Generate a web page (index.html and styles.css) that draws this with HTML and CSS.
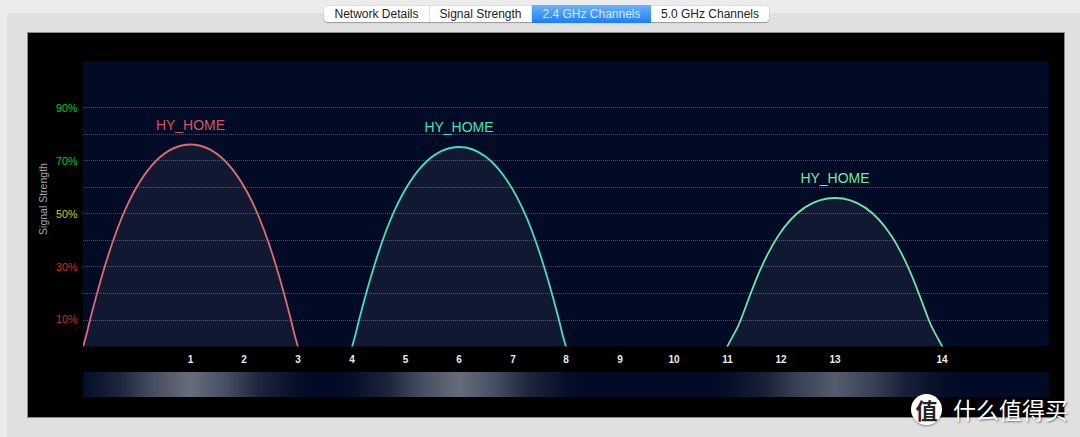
FILE: index.html
```html
<!DOCTYPE html>
<html lang="en">
<head>
    <meta charset="UTF-8">
    <title>2.4 GHz Channels</title>
    <link rel="stylesheet" href="styles.css">
</head>

<body>
    <div class="tabs">
        <span class="tab tab-network">Network Details</span>
        <span class="tab tab-signal">Signal Strength</span>
        <span class="tab tab-24 active">2.4 GHz Channels</span>
        <span class="tab tab-50">5.0 GHz Channels</span>
    </div>

    <div class="panel">
        <div class="chart">
            <svg class="chart-svg" width="1038" height="385" viewBox="27 32 1038 385">
                <defs>
                    <linearGradient id="glow" gradientUnits="userSpaceOnUse" x1="83" y1="0" x2="1049" y2="0">
                        <stop offset="0" stop-color="#fff" stop-opacity="0.01"/>
                        <stop offset="0.0388" stop-color="#fff" stop-opacity="0.11"/>
                        <stop offset="0.0720" stop-color="#fff" stop-opacity="0.27"/>
                        <stop offset="0.1108" stop-color="#fff" stop-opacity="0.40"/>
                        <stop offset="0.1496" stop-color="#fff" stop-opacity="0.27"/>
                        <stop offset="0.1828" stop-color="#fff" stop-opacity="0.11"/>
                        <stop offset="0.2216" stop-color="#fff" stop-opacity="0.015"/>
                        <stop offset="0.2378" stop-color="#fff" stop-opacity="0"/>
                        <stop offset="0.2622" stop-color="#fff" stop-opacity="0"/>
                        <stop offset="0.2784" stop-color="#fff" stop-opacity="0.015"/>
                        <stop offset="0.3172" stop-color="#fff" stop-opacity="0.11"/>
                        <stop offset="0.3504" stop-color="#fff" stop-opacity="0.27"/>
                        <stop offset="0.3892" stop-color="#fff" stop-opacity="0.40"/>
                        <stop offset="0.4280" stop-color="#fff" stop-opacity="0.27"/>
                        <stop offset="0.4612" stop-color="#fff" stop-opacity="0.11"/>
                        <stop offset="0.5000" stop-color="#fff" stop-opacity="0.015"/>
                        <stop offset="0.5162" stop-color="#fff" stop-opacity="0"/>
                        <stop offset="0.6516" stop-color="#fff" stop-opacity="0"/>
                        <stop offset="0.6678" stop-color="#fff" stop-opacity="0.012"/>
                        <stop offset="0.7066" stop-color="#fff" stop-opacity="0.09"/>
                        <stop offset="0.7398" stop-color="#fff" stop-opacity="0.22"/>
                        <stop offset="0.7786" stop-color="#fff" stop-opacity="0.33"/>
                        <stop offset="0.8174" stop-color="#fff" stop-opacity="0.22"/>
                        <stop offset="0.8506" stop-color="#fff" stop-opacity="0.09"/>
                        <stop offset="0.8894" stop-color="#fff" stop-opacity="0.012"/>
                        <stop offset="0.9056" stop-color="#fff" stop-opacity="0"/>
                    </linearGradient>
                    <clipPath id="plot-clip">
                        <rect x="83" y="61" width="966" height="285.5"/>
                    </clipPath>
                </defs>

                <rect class="plot-bg" x="83" y="61" width="966" height="285.5"/>

                <!-- curve fills go under the grid -->
                <g class="curve-fills" clip-path="url(#plot-clip)">
                    <path d="M83 347 C86 337 88 329 90 320 C101 279 131 144.5 190.5 144.5 C250 144.5 280 279 291 320 C293 329 295 337 298 347 Z"/>
                    <path d="M352 347 C355 337 357 329 359 320 C370 280 400 147 459 147 C518 147 548 280 559 320 C561 329 563 337 566 347 Z"/>
                    <path d="M727 347 C731.5 338 737 330 740.7 320 C756 281 780 198 835 198 C889.5 198 913.5 281 928.8 320 C932.5 330 938 338 942.5 347 Z"/>
                </g>

                <g class="grid">
                    <line x1="83" x2="1049" y1="107.5" y2="107.5"/>
                    <line x1="83" x2="1049" y1="134.5" y2="134.5"/>
                    <line x1="83" x2="1049" y1="160.5" y2="160.5"/>
                    <line x1="83" x2="1049" y1="187.5" y2="187.5"/>
                    <line x1="83" x2="1049" y1="213.5" y2="213.5"/>
                    <line x1="83" x2="1049" y1="240.5" y2="240.5"/>
                    <line x1="83" x2="1049" y1="266.5" y2="266.5"/>
                    <line x1="83" x2="1049" y1="293.5" y2="293.5"/>
                    <line x1="83" x2="1049" y1="320.5" y2="320.5"/>
                </g>

                <g clip-path="url(#plot-clip)" fill="none">
                    <path class="curve-red" d="M83 347 C86 337 88 329 90 320 C101 279 131 144.5 190.5 144.5 C250 144.5 280 279 291 320 C293 329 295 337 298 347"/>
                    <path class="curve-teal" d="M352 347 C355 337 357 329 359 320 C370 280 400 147 459 147 C518 147 548 280 559 320 C561 329 563 337 566 347"/>
                    <path class="curve-green" d="M727 347 C731.5 338 737 330 740.7 320 C756 281 780 198 835 198 C889.5 198 913.5 281 928.8 320 C932.5 330 938 338 942.5 347"/>
                </g>

                <text class="net-label label-red" x="190.5" y="130">HY_HOME</text>
                <text class="net-label label-teal" x="459" y="132">HY_HOME</text>
                <text class="net-label label-green" x="835" y="183">HY_HOME</text>

                <g class="y-labels">
                    <text class="lvl-good" x="77.5" y="111.5">90%</text>
                    <text class="lvl-good" x="77.5" y="164.5">70%</text>
                    <text class="lvl-mid" x="77.5" y="217.5">50%</text>
                    <text class="lvl-bad" x="77.5" y="270.5">30%</text>
                    <text class="lvl-bad" x="77.5" y="323">10%</text>
                </g>
                <text class="y-title" transform="translate(47 199) rotate(-90)">Signal Strength</text>

                <g class="x-labels">
                    <text x="190.5" y="363">1</text>
                    <text x="244" y="363">2</text>
                    <text x="298" y="363">3</text>
                    <text x="352" y="363">4</text>
                    <text x="405.5" y="363">5</text>
                    <text x="459" y="363">6</text>
                    <text x="513" y="363">7</text>
                    <text x="566" y="363">8</text>
                    <text x="620" y="363">9</text>
                    <text x="674" y="363">10</text>
                    <text x="727.5" y="363">11</text>
                    <text x="781" y="363">12</text>
                    <text x="835" y="363">13</text>
                    <text x="942" y="363">14</text>
                </g>

                <rect class="plot-bg" x="83" y="372" width="966" height="25"/>
                <rect x="83" y="372" width="966" height="25" fill="url(#glow)"/>
            </svg>
        </div>
    </div>

    <div class="watermark">
        <span class="wm-logo">值</span>
        <span class="wm-text">什么值得买</span>
    </div>
</body>
</html>
```

FILE: styles.css
```css
* {
    box-sizing: border-box;
    margin: 0;
    padding: 0;
}

html, body {
    height: 437px;
    overflow: hidden;
}

body {
    background-color: #ececec;
    font-family: "Liberation Sans", Arial, sans-serif;
    padding: 13px 0 0 7px;
}

.panel {
    background-color: #e0e0e0;
    border-radius: 4px 0 0 0;
    height: 424px;
    padding: 19px 15px 0 20px;
}

.chart {
    width: 1038px;
    height: 386px;
    background-color: #000;
    outline: 1px solid #8a8a8a;
    outline-offset: -1px;
}

.chart-svg {
    display: block;
}

/* segmented control sits over the panel edge */
.tabs {
    position: absolute;
    left: 324px;
    top: 6px;
    display: flex;
    height: 16px;
    background-color: #fff;
    border-radius: 4px;
    box-shadow: 0 1px 1px rgba(0, 0, 0, 0.28), 0 0 0 0.5px rgba(0, 0, 0, 0.1);
    font-size: 12px;
    line-height: 16px;
    color: #222;
}

.tab {
    text-align: center;
    border-right: 1px solid #e2e2e2;
}

.tab-network { width: 106px; }
.tab-signal { width: 102px; }
.tab-24 { width: 119px; }
.tab-50 { width: 118px; border-right: none; }

.tab.active {
    color: #dce9fb;
    border-right: none;
    height: 18px;
    margin-top: -1px;
    line-height: 18px;
    background: linear-gradient(#6cb0f9, #1b7ff5);
}

.plot-bg { fill: #020b25; }

.curve-fills path { fill: rgba(255, 255, 255, 0.06); }

.grid line {
    stroke: rgba(255, 255, 255, 0.28);
    stroke-width: 1;
    stroke-dasharray: 1 1;
}

.curve-red { stroke: #dc6a72; stroke-width: 1.8; }
.curve-teal { stroke: #48dcb8; stroke-width: 1.8; }
.curve-green { stroke: #72e0aa; stroke-width: 1.8; }

.net-label {
    font-size: 14px;
    text-anchor: middle;
}

.label-red { fill: #d2545f; }
.label-teal { fill: #45e2b4; }
.label-green { fill: #72e8a6; }

.y-labels text {
    font-size: 10.7px;
    text-anchor: end;
}

.lvl-good { fill: #12c62a; }
.lvl-mid { fill: #cccc20; }
.lvl-bad { fill: #dd2a1e; }

.y-title {
    font-size: 10.5px;
    fill: #a8a8a8;
    text-anchor: middle;
}

.x-labels text {
    font-size: 10px;
    font-weight: 700;
    fill: #ececec;
    text-anchor: middle;
}

/* site watermark stamped over the corner */
.watermark {
    position: absolute;
    left: 911px;
    top: 394px;
    display: flex;
    align-items: center;
    gap: 11px;
    font-family: "Noto Sans CJK SC", "Liberation Sans", sans-serif;
}

.wm-logo {
    width: 31px;
    height: 31px;
    border-radius: 50%;
    background-color: #fff;
    color: #222;
    font-size: 22px;
    font-weight: 700;
    line-height: 30px;
    text-align: center;
    box-shadow: 0 1px 2px rgba(0, 0, 0, 0.4);
}

.wm-text {
    color: #fff;
    font-size: 23px;
    line-height: 31px;
    text-shadow: 1px 1px 2px rgba(0, 0, 0, 0.5);
}
```
